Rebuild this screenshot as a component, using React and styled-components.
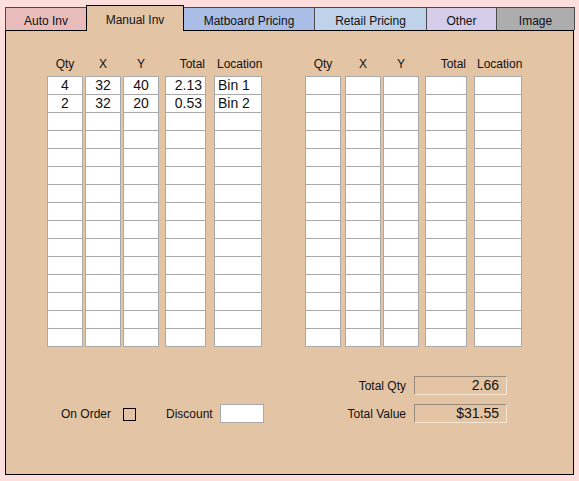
import React from "react";
import styled, { createGlobalStyle } from "styled-components";

const GlobalStyle = createGlobalStyle`
  html, body {
    margin: 0;
    padding: 0;
    background: #fcdfdc;
  }
  body {
    font-family: "Liberation Sans", Arial, sans-serif;
    color: #111;
  }
  * {
    box-sizing: border-box;
  }
`;

const Window = styled.div`
  width: 579px;
  height: 481px;
  padding: 5px 0 0 5px;
`;

const TabBar = styled.div`
  display: flex;
  align-items: flex-end;
  height: 25px;
`;

const Tab = styled.div`
  position: relative;
  width: ${(p) => p.$w}px;
  height: ${(p) => (p.$active ? 26 : 23)}px;
  margin-left: -1px;
  margin-bottom: ${(p) => (p.$active ? -1 : 0)}px;
  z-index: ${(p) => (p.$active ? 2 : 1)};
  display: flex;
  align-items: center;
  justify-content: center;
  padding-top: ${(p) => (p.$active ? 2 : 3)}px;
  background: ${(p) => (p.$active ? "#e3c5a6" : p.$bg)};
  border: 1px solid ${(p) => (p.$active ? "#000" : "#4a4a4a")};
  border-bottom: none;
  font-size: 12px;

  &:first-child {
    margin-left: 0;
  }
`;

const Panel = styled.div`
  width: 569px;
  height: 445px;
  background: #e3c5a6;
  border: 1px solid #000;
  padding-top: 26px;
  display: flex;
  flex-direction: column;
`;

const Grid = styled.div`
  display: flex;
  padding-left: 41px;
`;

const Column = styled.div`
  display: flex;
  flex-direction: column;
  width: ${(p) => p.$w}px;
  margin-left: ${(p) => p.$gap}px;
`;

const Header = styled.div`
  height: 14px;
  line-height: 14px;
  margin-bottom: 5px;
  font-size: 12px;
  white-space: nowrap;
  text-align: ${(p) => p.$align};
  padding: 0 ${(p) => (p.$align === "center" ? 0 : 1)}px 0
    ${(p) => (p.$align === "left" ? 3 : 0)}px;
`;

const Cell = styled.div`
  height: 19px;
  line-height: 17px;
  background: #fff;
  border: 1px solid #a9a9a9;
  font-size: 14px;
  padding: 0 3px;
  white-space: nowrap;
  text-align: ${(p) => p.$align};

  & + & {
    margin-top: -1px;
  }
`;

const Footer = styled.div`
  display: flex;
  align-items: flex-end;
  margin-top: 29px;
`;

const OrderRow = styled.div`
  display: flex;
  align-items: center;
  height: 19px;
  padding-left: 55px;
  font-size: 12px;
`;

const Check = styled.span`
  width: 13px;
  height: 13px;
  border: 1px solid #000;
  margin-left: 12px;
  margin-top: 1px;
`;

const DiscountLabel = styled.span`
  margin-left: 30px;
`;

const DiscountInput = styled.div`
  width: 44px;
  height: 19px;
  margin-left: 7px;
  background: #fff;
  border: 1px solid #a9a9a9;
`;

const Totals = styled.div`
  display: grid;
  grid-template-columns: auto 93px;
  column-gap: 8px;
  row-gap: 9px;
  align-items: center;
  margin-left: auto;
  margin-right: 66px;
`;

const TotalLabel = styled.span`
  font-size: 12px;
  text-align: right;
`;

const TotalBox = styled.div`
  height: 19px;
  line-height: 17px;
  font-size: 14px;
  text-align: right;
  padding-right: 7px;
  border: 1px solid;
  border-color: #9b8b7b #f4e4d2 #f4e4d2 #9b8b7b;
`;

const tabs = [
  { label: "Auto Inv", w: 82, bg: "#e9bcbc" },
  { label: "Manual Inv", w: 98, active: true },
  { label: "Matboard Pricing", w: 132, bg: "#a9bde7" },
  { label: "Retail Pricing", w: 113, bg: "#bed2e9" },
  { label: "Other", w: 71, bg: "#d5cdea" },
  { label: "Image", w: 79, bg: "#adadad" },
];

const columns = [
  { key: "qty", label: "Qty", w: 36, gap: 0, align: "center" },
  { key: "x", label: "X", w: 36, gap: 2, align: "center" },
  { key: "y", label: "Y", w: 36, gap: 2, align: "center" },
  { key: "total", label: "Total", w: 41, gap: 6, align: "right" },
  { key: "loc", label: "Location", w: 48, gap: 8, align: "left" },
  { key: "qty2", label: "Qty", w: 36, gap: 43, align: "center" },
  { key: "x2", label: "X", w: 36, gap: 4, align: "center" },
  { key: "y2", label: "Y", w: 36, gap: 2, align: "center" },
  { key: "total2", label: "Total", w: 42, gap: 6, align: "right" },
  { key: "loc2", label: "Location", w: 48, gap: 7, align: "left" },
];

const rows = [
  { qty: "4", x: "32", y: "40", total: "2.13", loc: "Bin 1" },
  { qty: "2", x: "32", y: "20", total: "0.53", loc: "Bin 2" },
];

const ROW_COUNT = 15;

export default function App() {
  return (
    <>
      <GlobalStyle />
      <Window>
        <TabBar>
          {tabs.map((t) => (
            <Tab key={t.label} $w={t.w} $bg={t.bg} $active={t.active}>
              {t.label}
            </Tab>
          ))}
        </TabBar>
        <Panel>
          <Grid>
            {columns.map((c) => (
              <Column key={c.key} $w={c.w} $gap={c.gap}>
                <Header $align={c.align}>{c.label}</Header>
                {Array.from({ length: ROW_COUNT }).map((_, i) => (
                  <Cell key={i} $align={c.align}>
                    {rows[i] ? rows[i][c.key] : ""}
                  </Cell>
                ))}
              </Column>
            ))}
          </Grid>
          <Footer>
            <OrderRow>
              <span>On Order</span>
              <Check />
              <DiscountLabel>Discount</DiscountLabel>
              <DiscountInput />
            </OrderRow>
            <Totals>
              <TotalLabel>Total Qty</TotalLabel>
              <TotalBox>2.66</TotalBox>
              <TotalLabel>Total Value</TotalLabel>
              <TotalBox>$31.55</TotalBox>
            </Totals>
          </Footer>
        </Panel>
      </Window>
    </>
  );
}
